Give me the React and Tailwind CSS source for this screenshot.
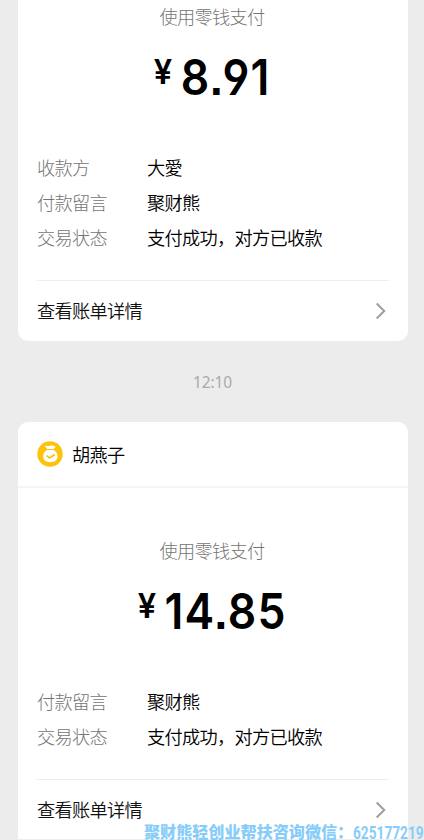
import { clsx } from "clsx";

function Chevron() {
    return (
        <svg className="mr-[3px] h-[18px] w-[11px]" viewBox="0 0 11 18" fill="none">
            <path d="M1.7 1.5 L9.2 9 L1.7 16.5" stroke="#a0a0a0" strokeWidth="2.1" />
        </svg>
    );
}

function MoneyBag() {
    return (
        <svg className="h-[26px] w-[26px]" viewBox="0 0 26 26">
            <circle cx="13" cy="13" r="12.7" fill="#fdc20a" />
            <path
                d="M8.3 4.8c1.500-.5 2.700.5 4.100.1 1.500-.5 3.300-.5 4.500.1.900.3 1.500-.1 1.500.5.1 1-.9 1.500-1.500 2.500H10.100C9.700 7.200 7.600 5.800 8.300 4.800Z"
                fill="#fff"
            />
            <path
                d="M10 9h6.500c2.300 1.200 4.100 3.600 4.100 6.300 0 3.900-3 5.900-7.300 5.900s-7.200-2-7.200-5.900c0-2.700 1.800-5.100 3.900-6.300Z"
                fill="#fff"
            />
            <path d="M9.700 14.600 L12.500 17 L17.900 13.500" stroke="#fdc20a" strokeWidth="1.700" fill="none" />
        </svg>
    );
}

function Amount({ value }) {
    return (
        <div className="flex h-[60px] origin-center scale-x-[0.89] items-start justify-center font-['Inter',sans-serif] font-semibold text-black [font-feature-settings:'cv04','ss07']">
            <span className="mt-[5px] mr-[9px] origin-right scale-x-[1.08] text-[34px] leading-[40px] tracking-normal">
                ¥
            </span>
            <span className="text-[50px] leading-[60px] tracking-[1.3px]">{value}</span>
        </div>
    );
}

function Row({ label, value }) {
    return (
        <div className="flex h-[35px] items-center">
            <span className="w-[110px] font-light text-[#757575]">{label}</span>
            <span className="text-black">{value}</span>
        </div>
    );
}

function PaymentCard({ sender, amount, rows, className }) {
    return (
        <section className={clsx("mx-[18px] w-[390px] shrink-0 bg-white", className)}>
            {sender && (
                <header className="flex h-[66px] items-center gap-[9px] border-b-2 border-[#f5f5f5] px-[19px] text-black">
                    <MoneyBag />
                    <span>{sender}</span>
                </header>
            )}
            <p
                className={clsx(
                    "pr-[2px] pb-[1px] text-center font-light text-[#757575]",
                    sender ? "pt-[49px]" : "pt-[3px]",
                )}
            >
                使用零钱支付
            </p>
            <div className="pt-[17px]">
                <Amount value={amount} />
            </div>
            <div className="px-[19px] pt-[42px]">
                {rows.map((row) => (
                    <Row key={row.label} {...row} />
                ))}
                <div className="mt-[26px] flex h-[60px] items-center justify-between border-t border-[#eeeeee] text-[#111111]">
                    <span className="pb-[1px]">查看账单详情</span>
                    <Chevron />
                </div>
            </div>
        </section>
    );
}

const status = { label: "交易状态", value: "支付成功，对方已收款" };
const note = { label: "付款留言", value: "聚财熊" };

export default function App() {
    return (
        <main className="relative flex h-[840px] w-[424px] flex-col overflow-hidden bg-[#ececec] font-['Noto_Sans_CJK_SC',sans-serif] text-[18.2px] leading-[26px] font-[350] tracking-[-0.7px]">
            <PaymentCard
                amount="8.91"
                rows={[{ label: "收款方", value: "大愛" }, note, status]}
                className="h-[341px] rounded-b-[10px]"
            />
            <time className="flex h-[81px] shrink-0 items-center justify-center pl-[1px] font-['Noto_Sans',sans-serif] text-[15.5px] font-normal tracking-[-0.1px] text-[#aaaaaa]">
                12:10
            </time>
            <PaymentCard
                sender="胡燕子"
                amount="14.85"
                rows={[note, status]}
                className="h-[418px] rounded-t-[10px] border-b border-[#eeeeee]"
            />
            <p className="absolute top-[823px] left-[144px] flex h-[16px] w-[280px] items-center whitespace-nowrap text-[#87cdf9]">
                <span className="w-[209px] text-[16.1px] leading-[16px] font-black tracking-normal">
                    聚财熊轻创业帮扶咨询微信：
                </span>
                <span className="w-[71px]">
                    <span className="inline-block origin-left scale-x-[0.72] font-['Roboto',sans-serif] text-[19px] leading-[16px] font-bold tracking-normal">
                        625177219
                    </span>
                </span>
            </p>
        </main>
    );
}
